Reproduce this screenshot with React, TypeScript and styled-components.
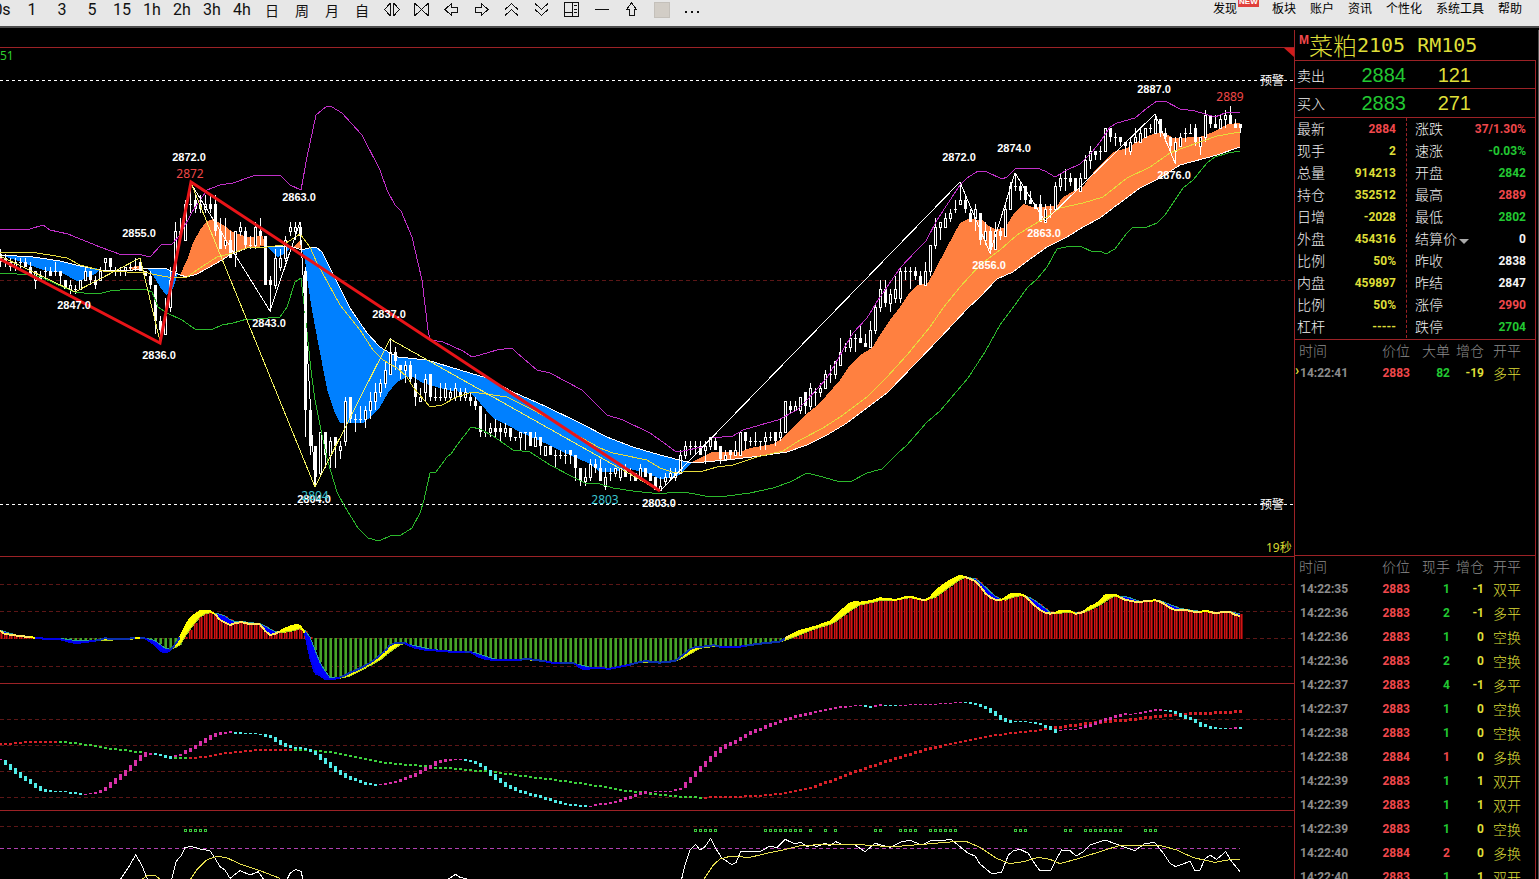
import React from "react";
import styled, { createGlobalStyle } from "styled-components";

const RED_LINE = "#9c2226";
const UI_FONT = '"Noto Sans CJK SC", sans-serif';

const GlobalStyle = createGlobalStyle`
  * { box-sizing: border-box; }
  body { margin: 0; background: #000; font-family: ${UI_FONT}; }
`;

/* ---------- page shell ---------- */

const Page = styled.div`
  display: flex;
  flex-direction: column;
  height: 100vh;
  overflow: hidden;
  background: #000;
`;

const Toolbar = styled.header`
  display: flex;
  flex: none;
  justify-content: space-between;
  height: 28px;
  overflow: hidden;
  background: #e7e7e7;
  border-bottom: 2px solid #4c4c4c;
`;

const PeriodBar = styled.nav`
  display: flex;
  margin-left: -13px;
`;

const ToolButton = styled.button`
  display: flex;
  align-items: center;
  justify-content: center;
  width: 30px;
  height: 20px;
  padding: 0;
  border: 0;
  background: none;
  color: #111;
  font: 16px/20px Roboto, sans-serif;

  svg { display: block; fill: none; stroke: #111; shape-rendering: crispEdges; }
`;

const CjkToolButton = styled(ToolButton)`
  font: 14px/20px ${UI_FONT};
`;

const Swatch = styled.span`
  width: 16px;
  height: 16px;
  background: #d2cdc6;
  border: 1px solid #c4c0ba;
`;

const MenuBar = styled.nav`
  display: flex;
  gap: 14px;
  padding-right: 17px;
`;

const MenuLink = styled.a<{ $wide?: boolean }>`
  position: relative;
  height: 16px;
  margin-right: ${(p) => (p.$wide ? 21 : 0)}px;
  color: #000;
  font-size: 12px;
  line-height: 16px;
  text-decoration: none;
  white-space: nowrap;
`;

const NewBadge = styled.span`
  position: absolute;
  top: -4px;
  left: 25px;
  width: 21px;
  height: 11px;
  background: #e0403c;
  color: #fff;
  font: bold 8px/12px "Liberation Sans", sans-serif;
  text-align: center;
`;

const Workspace = styled.div`
  display: flex;
  flex: 1;
  min-height: 0;
`;

/* ---------- chart column ---------- */

const ChartColumn = styled.main`
  flex: 1;
  min-width: 0;
  overflow: hidden;
`;

const ChartStrip = styled.div`
  height: 20px;
  border-bottom: 1px solid ${RED_LINE};
`;

const ChartPane = styled.section`
  border-bottom: 1px solid ${RED_LINE};

  svg { display: block; width: 100%; height: auto; }
`;

const LAST_X = 1240;
const xOf = (i: number) => i * 5;
const yOf = (price: number) => Math.round(182 + (2872 - price) * 4.47);

type Point = [number, number];

const parse = (text: string): Point[] =>
  text.trim().split(/\s+/).map((pair) => pair.split(",").map(Number) as Point);

/* Indicator traces are sampled in thirds of a unit, in sections that each start at their own x. */
const sections = (...parts: [number, string][]): Point[] =>
  parts.flatMap(([x0, text]) =>
    parse(text).map(([x, y]) => [x0 + x / 3, 560 + y / 3] as Point)
  );

const join = (points: Point[]) => points.map((p) => p.join(",")).join(" ");

const valueAt = (points: Point[], x: number) => {
  const next = points.findIndex((p) => p[0] >= x);
  if (next === 0) return points[0][1];
  if (next < 0) return points[points.length - 1][1];
  const [x1, y1] = points[next - 1];
  const [x2, y2] = points[next];
  return x2 === x1 ? y2 : y1 + ((y2 - y1) * (x - x1)) / (x2 - x1);
};

/* open, high, low, close, as points above 2800 */
const CANDLES = `
56,57,53,54 55,56,53,54 54,55,52,53 53,55,52,54 54,55,52,54 54,55,53,53 53,54,51,51 50,52,48,52
51,52,50,50 52,53,50,52 52,53,51,51 52,54,51,52 52,52,49,51 50,50,48,48 48,50,47,49 48,49,47,48
48,50,48,50 50,53,50,52 52,52,49,50 50,51,48,49 50,53,50,52 54,55,52,55 55,55,52,53 52,53,51,52
52,53,51,52 52,53,51,53 53,54,52,53 53,55,52,53 54,55,52,52 52,52,51,51 51,52,48,49 49,49,38,41
41,42,37,39 38,46,38,42 44,53,43,50 52,63,51,61 60,64,59,61 59,68,59,67 67,72,65,67 68,69,65,66
67,69,65,66 66,69,65,67 67,69,65,66 67,69,60,61 61,64,57,57 58,64,57,59 59,61,55,55 56,61,53,61
61,63,60,62 61,62,57,58 58,60,57,58 58,63,57,62 61,64,58,60 60,60,49,49 50,51,43,49 49,57,48,55
53,57,52,55 55,60,54,59 61,63,60,62 61,63,59,62 62,63,58,60 52,53,15,21 21,22,11,13 13,13,4,6
7,16,6,16 16,16,8,11 11,15,8,14 15,15,8,13 12,14,10,13 14,24,13,23 24,24,18,19 19,20,16,19
19,22,18,19 19,22,17,21 21,25,19,23 23,27,21,25 25,28,24,27 27,32,26,30 29,37,29,34 34,35,30,32
31,31,28,30 30,32,27,31 31,32,27,28 27,29,22,24 23,26,23,24 25,29,23,28 29,29,23,24 24,26,23,24
24,27,23,24 24,27,23,26 24,26,23,25 24,27,23,26 25,26,23,24 24,26,23,25 24,25,22,23 23,24,21,22
22,22,15,16 16,20,15,16 16,18,15,17 17,19,15,16 17,18,14,16 16,18,15,17 17,17,14,15 15,15,14,15
15,16,12,16 16,16,12,16 16,16,13,13 13,16,13,15 15,15,11,13 11,13,11,13 13,13,11,11 11,12,8,11
11,12,10,11 11,12,9,11 12,12,9,11 11,11,5,8 8,8,4,5 5,8,4,6 6,10,5,9 9,10,7,8
8,10,5,5 4,8,3,6 7,8,5,7 7,8,6,8 6,8,5,8 8,9,6,6 7,8,5,7 7,7,5,5
6,9,5,8 8,8,6,6 7,7,5,5 6,6,3,3 3,6,3,4 5,7,4,6 6,8,5,7 6,8,5,7
7,12,7,11 11,14,10,13 13,14,11,13 13,14,11,13 13,14,11,11 12,14,9,13 13,15,12,15 14,15,12,12
13,13,9,10 10,12,10,11 12,12,10,11 11,14,11,12 11,16,11,16 16,16,12,14 14,15,13,14 14,16,13,14
14,14,12,14 14,16,12,15 15,16,14,15 16,16,13,14 15,19,14,16 16,23,16,23 22,23,20,21 21,23,21,22
21,24,20,24 25,25,20,22 22,27,21,26 25,26,22,25 25,27,24,26 26,30,26,29 29,31,27,29 29,32,28,32
31,37,31,34 35,36,34,35 35,39,34,37 37,38,34,37 37,40,36,36 36,38,35,35 35,41,35,39 39,45,38,44
44,50,43,48 48,50,44,45 45,48,43,47 46,51,45,48 46,53,45,52 52,53,50,52 52,53,48,52 52,53,50,51
51,52,49,49 49,54,49,52 52,58,51,58 58,64,57,62 62,63,59,63 62,65,62,64 64,66,63,65 66,68,65,66
67,72,67,68 68,69,65,66 65,66,63,63 64,67,61,66 65,65,58,59 59,63,58,61 61,62,56,57 57,63,57,61
61,62,59,60 60,67,60,66 66,72,66,71 71,74,70,71 71,72,68,70 71,71,67,68 68,70,67,67 67,67,66,66
67,69,63,63 63,67,63,66 66,67,64,66 66,72,66,71 71,74,70,73 73,75,70,73 73,74,71,72 73,73,70,70
70,74,70,73 73,78,73,77 77,80,75,79 79,79,77,78 79,80,77,79 79,84,79,84 84,84,81,82 82,83,80,82
82,82,80,81 81,81,78,80 79,82,78,81 81,84,81,82 81,84,81,83 82,84,82,84 84,85,83,84 83,87,83,86
86,86,82,83 83,84,81,82 82,82,79,80 79,82,76,81 80,83,80,82 83,84,81,83 83,85,83,83 84,85,80,81
80,82,78,82 82,88,81,87 87,87,84,85 85,87,84,84 84,87,84,86 86,88,84,87 87,89,85,85 85,86,84,84
85,85,83,84`
  .trim()
  .split(/\s+/)
  .map((c) => c.split(",").map((v) => 2800 + Number(v)));

const UPPER_BAND = `0,229 30,229 43,225 50,230 68,234 100,247 122,255 138,254 150,257 161,245 172,244 180,235 192,212
207,190 220,185 233,183 253,176 280,175 290,185 301,190 307,157 316,115 327,106 332,107 342,113 362,135 380,170 387,190
395,205 401,211 412,237 422,280 428,330 430,340 443,342 463,351 472,357 480,355 497,350 512,348 517,353 537,370 550,373
567,382 582,390 595,403 607,415 623,420 650,433 667,445 675,451 683,451 702,447 712,438 733,436 743,430 767,423 778,420
797,410 807,400 827,378 843,350 853,333 867,318 878,300 885,290 900,268 917,250 926,241 937,220 960,185 967,178 978,171
987,172 1002,179 1007,177 1015,169 1020,168 1037,168 1045,171 1055,177 1067,170 1080,164 1092,152 1100,142 1110,127
1117,123 1135,118 1147,108 1157,101 1165,101 1180,109 1195,111 1205,114 1215,117 1225,113 1240,112`;

const LOWER_BAND = `0,273 17,274 33,275 43,278 63,287 75,292 80,292 88,294 102,293 110,291 130,289 147,290 152,292 158,307
167,313 182,320 195,329 213,329 222,325 233,323 247,319 257,319 280,317 287,307 295,282 301,278 305,313 311,370 315,400
322,435 328,462 337,492 345,507 358,528 368,538 379,541 390,536 401,535 412,528 420,513 424,500 430,473 436,472 447,457
451,454 457,445 471,427 480,429 493,436 513,450 530,452 550,465 573,477 585,483 597,483 613,488 633,491 661,494 667,493
682,492 695,494 710,497 727,496 750,493 773,488 790,482 807,473 823,477 840,482 852,481 867,473 882,469 897,454 907,445
927,422 940,411 968,378 985,352 1000,325 1012,309 1027,288 1037,279 1047,267 1057,249 1070,246 1082,247 1093,252
1100,251 1106,254 1115,249 1127,233 1133,227 1147,227 1157,223 1165,215 1183,188 1193,180 1207,163 1215,157 1228,153 1240,151`;

const SLOW_MA = `0,255 33,257 60,261 80,266 100,270 133,270 147,268 167,269 180,275 187,277 197,274 217,263 230,255 247,248
265,247 290,246 302,250 312,247 316,247 322,252 335,278 350,308 367,333 380,347 390,353 398,357 427,360 450,367 470,373
487,378 513,392 547,407 580,423 607,437 633,447 653,453 679,460 692,463 727,460 760,456 787,452 807,445 827,435 847,423
867,408 887,393 917,362 940,338 968,308 980,297 997,279 1013,272 1033,257 1047,247 1067,237 1083,227 1100,218 1113,208
1140,188 1160,178 1180,165 1217,155 1240,147`;

const MID_MA = `0,252 30,252 50,255 67,258 80,265 103,271 127,272 143,272 157,275 173,278 187,277 200,268 217,257 233,253
247,248 267,247 283,245 300,234 310,247 317,263 340,305 360,330 373,350 383,360 397,368 407,377 413,387 430,407 442,405
457,397 472,392 507,397 533,410 557,423 580,437 600,448 613,453 647,460 660,468 675,473 683,472 703,471 717,467 733,465
757,457 783,451 800,440 823,428 843,415 867,397 887,377 907,355 930,327 943,308 960,287 980,265 1000,250 1017,235
1033,225 1047,217 1060,208 1083,203 1103,197 1127,178 1150,167 1170,153 1183,148 1217,136 1240,132`;

const FALLING = [
  "0,255 33,257 60,261 80,266 100,269 95,274 82,280 77,281 62,273 43,270 27,264 10,258",
  "147,268 167,269 178,274 175,283 171,293 166,295 160,287 153,275",
  "268,247 290,246 297,248 290,249 282,255 278,257 273,253",
  `302,250 312,247 316,247 322,252 335,278 350,308 367,333 380,347 390,353 398,357 427,360 450,367 470,373 487,378
   513,392 547,407 580,423 607,437 633,447 653,453 679,460 692,462 680,475 667,478 660,479 647,473 630,469 613,472
   600,472 590,464 577,458 563,452 547,444 533,438 520,432 507,425 493,418 480,403 475,397 470,393 447,390 423,383
   413,377 407,377 397,382 388,393 380,407 373,415 363,423 340,423 335,413 328,393 322,363 317,337 312,310 308,285 305,260`,
];

const RISING = [
  "128,269 135,266 141,266 143,271",
  `180,275 187,260 193,243 200,230 207,221 213,219 223,225 233,232 247,237 263,236 265,246 247,248 230,255 217,263
   197,274 187,277`,
  "293,247 300,241 302,249",
  `692,462 700,458 712,452 740,452 750,448 773,444 783,438 790,430 803,417 820,403 833,388 840,380 850,365 860,355
   872,348 880,335 890,320 900,307 910,292 917,285 928,283 935,270 947,247 960,223 968,219 982,220 987,225 995,229
   1005,228 1013,215 1023,204 1033,207 1057,206 1062,198 1072,192 1082,188 1093,173 1103,162 1113,152 1127,148
   1137,142 1147,136 1157,133 1165,133 1173,138 1200,137 1213,132 1228,124 1240,123 1240,147 1217,155 1180,165
   1160,178 1140,188 1113,208 1100,218 1083,227 1067,237 1047,247 1033,257 1013,272 997,279 980,297 968,308 940,338
   917,362 887,393 867,408 847,423 827,435 807,445 787,452 760,456 727,460 692,463`,
];

const PIVOTS: [number, number, string][] = [
  [74, 309, "2847.0"], [139, 237, "2855.0"], [159, 359, "2836.0"], [189, 161, "2872.0"], [269, 327, "2843.0"],
  [299, 201, "2863.0"], [389, 318, "2837.0"], [314, 503, "2804.0"], [659, 507, "2803.0"], [959, 161, "2872.0"],
  [989, 269, "2856.0"], [1014, 152, "2874.0"], [1044, 237, "2863.0"], [1154, 93, "2887.0"], [1174, 179, "2876.0"],
];

const EXTREMES: [number, number, string, string][] = [
  [190, 178, "2872", "#f04848"], [1230, 101, "2889", "#f04848"],
  [315, 500, "2804", "#3cc4d0"], [605, 504, "2803", "#3cc4d0"],
];

const PivotLabel = styled.text`
  fill: #fff;
  font: bold 11px "Liberation Sans", sans-serif;
  text-anchor: middle;
`;

const ExtremeLabel = styled.text`
  font: 12px "Noto Sans", sans-serif;
  text-anchor: middle;
`;

const NoteLabel = styled.text`
  font: 12px "Noto Sans", ${UI_FONT};
`;

const Trace = styled.polyline`
  fill: none;
  stroke-width: 1px;
  shape-rendering: crispEdges;
`;

const GridLines = ({ levels }: { levels: number[] }) => (
  <g stroke="#5c1616" strokeDasharray="4 3" shapeRendering="crispEdges">
    {levels.map((y) => (
      <line key={y} x1={0} x2={1294} y1={y + 0.5} y2={y + 0.5} />
    ))}
  </g>
);

const PriceChart = () => (
  <svg viewBox="0 48 1294 508" role="img" aria-label="菜粕2105 K线">
    <GridLines levels={[280]} />
    <g stroke="#fff" strokeDasharray="3 3" shapeRendering="crispEdges">
      <line x1={0} x2={1294} y1={80.5} y2={80.5} />
      <line x1={0} x2={1294} y1={504.5} y2={504.5} />
    </g>
    <g shapeRendering="crispEdges">
      {FALLING.map((p) => <polygon key={p} points={p} fill="#0080ff" />)}
      {RISING.map((p) => <polygon key={p} points={p} fill="#ff8040" />)}
    </g>
    <g shapeRendering="crispEdges">
      {CANDLES.map(([open, high, low, close], i) => {
        const top = yOf(Math.max(open, close));
        const height = Math.max(1, yOf(Math.min(open, close)) - top);
        const x = xOf(i);
        return (
          <g key={i}>
            <rect x={x} y={yOf(high)} width={1} height={yOf(low) - yOf(high)} fill="#fff" />
            {open > close || height === 1 ? (
              <rect x={x - 1} y={top} width={3} height={height} fill="#fff" />
            ) : (
              <rect x={x - 0.5} y={top + 0.5} width={2} height={height} fill="#000" stroke="#fff" />
            )}
          </g>
        );
      })}
    </g>
    <Trace points={SLOW_MA} stroke="#fff" />
    <Trace points={MID_MA} stroke="#e6dc3c" />
    <Trace points={UPPER_BAND} stroke="#c030c8" />
    <Trace points={LOWER_BAND} stroke="#2cb82c" />
    <Trace points="190,182 270,311 300,222 315,487" stroke="#fff" />
    <Trace points="660,491 960,182 990,253 1015,173 1045,221 1155,114 1175,163" stroke="#fff" />
    <Trace points="0,256 75,292 140,258 160,341 191,183 315,487 390,339 660,491" stroke="#f0f060" />
    <polyline points="0,259 160,343 191,182 660,491" fill="none" stroke="#e81418" strokeWidth={3} />
    {PIVOTS.map(([x, y, label]) => (
      <PivotLabel key={x} x={x} y={y}>{label}</PivotLabel>
    ))}
    {EXTREMES.map(([x, y, label, color]) => (
      <ExtremeLabel key={x} x={x} y={y} fill={color}>{label}</ExtremeLabel>
    ))}
    <NoteLabel x={0} y={60} fill="#2fd02f">51</NoteLabel>
    <NoteLabel x={1260} y={85} fill="#fff">预警</NoteLabel>
    <NoteLabel x={1260} y={509} fill="#fff">预警</NoteLabel>
    <NoteLabel x={1266} y={552} fill="#d8d830">19秒</NoteLabel>
    <polygon points="1284,48 1294,48 1294,57" fill="#d01c1c" />
  </svg>
);

const MACD_FAST = sections(
  [0, `0,213 15,222 60,228 95,232 130,236 185,238 215,248 240,248 300,240 318,233 330,238 385,237 400,233 440,236
    465,255 485,277 500,278 515,268 530,248 545,222 560,190 575,168 600,154 630,154 645,162 660,180 690,195 710,188
    730,186 750,193 780,193 795,212 810,225 830,220 860,203 890,194 905,198 915,220 930,290 945,340 960,345 975,358
    1000,357 1030,350 1040,342 1070,330 1100,315 1130,295 1160,268 1175,250 1210,247 1240,262 1280,270`],
  [430, `0,270 60,275 120,275 145,290 170,298 190,299 270,300 285,296 340,303 370,309 430,308 445,318 460,330 485,324
    540,326 600,314 640,303 690,308 735,303 760,285 785,263 820,260 850,255 870,260 930,260 980,252 1050,245 1065,235
    1110,212 1150,202 1200,185 1225,160 1260,130 1280,125`],
  [860, `0,128 40,122 60,115 110,120 145,108 180,118 200,122 215,108 235,85 270,62 300,47 320,52 350,65 380,105 400,118
    425,122 450,103 490,103 515,128 545,155 575,162 600,153 630,153 640,161 665,160 690,140 715,130 735,105 765,104
    790,118 830,126 870,123 890,120 910,130 940,150 980,150 1010,157 1040,152 1065,160 1100,154 1115,157 1130,168 1143,168`]
);

const MACD_SLOW = sections(
  [0, `0,210 50,226 100,233 185,236 240,243 300,242 440,235 465,242 500,268 515,268 540,255 560,222 580,195 605,165
    635,157 670,165 700,185 740,186 785,192 830,218 870,215 905,205 925,218 945,270 965,320 990,352 1025,355 1050,348
    1100,322 1140,300 1170,275 1200,255 1215,250 1280,265`],
  [430, `0,268 60,273 130,276 190,297 280,298 380,308 440,312 480,322 540,325 640,306 700,308 740,303 775,285 810,265
    860,258 930,259 1050,246 1090,232 1150,208 1210,190 1250,160 1280,140`],
  [860, `0,135 60,122 110,120 150,113 200,120 230,110 270,80 310,52 345,55 370,75 400,105 430,122 470,108 500,107
    530,125 575,160 640,158 680,155 720,135 760,108 800,110 840,124 900,122 960,145 1010,153 1065,157 1110,155 1143,162`]
);

const ZERO = 638;
const STEPS = Array.from({ length: LAST_X / 5 + 1 }, (_, i) => i);

const MacdChart = () => (
  <svg viewBox="0 557 1294 126" role="img" aria-label="MACD">
    <GridLines levels={[584, 611, 638, 666]} />
    <g shapeRendering="crispEdges">
      {STEPS.map((i) => {
        const x = xOf(i);
        const y = Math.round(valueAt(MACD_SLOW, x));
        if (y === ZERO) return null;
        return y < ZERO ? (
          <g key={i}>
            <rect x={x - 1} y={y} width={4} height={ZERO + 1 - y} fill="#780808" />
            <rect x={x - 1} y={y} width={1} height={ZERO + 1 - y} fill="#d01414" />
            <rect x={x + 1} y={y} width={1} height={ZERO + 1 - y} fill="#d01414" />
          </g>
        ) : (
          <g key={i}>
            <rect x={x - 1} y={ZERO} width={3} height={y - ZERO} fill="#236a14" />
            <rect x={x} y={ZERO} width={2} height={y - ZERO} fill="#48a428" />
          </g>
        );
      })}
      {STEPS.slice(0, -1).map((i) => {
        const a = xOf(i);
        const b = xOf(i + 1);
        const f = [valueAt(MACD_FAST, a), valueAt(MACD_FAST, b)];
        const s = [valueAt(MACD_SLOW, a), valueAt(MACD_SLOW, b)];
        const up = f[0] + f[1] < s[0] + s[1];
        const line = (f[0] + f[1]) / 2 < ZERO ? "#ffe860" : up ? "#0a30b0" : "#0000e8";
        return (
          <g key={i}>
            <polygon
              points={`${a},${f[0]} ${b},${f[1]} ${b},${s[1]} ${a},${s[0]}`}
              fill={up ? "#ffff00" : "#0000ff"}
              stroke={up ? "#ffff00" : "none"}
            />
            <line x1={a} y1={s[0]} x2={b} y2={s[1]} stroke={up ? "#b4d020" : "#28a0a0"} />
            <line x1={a} y1={f[0]} x2={b} y2={f[1]} stroke={up && f[0] < ZERO ? "#ffff00" : line} strokeWidth={2} />
          </g>
        );
      })}
    </g>
  </svg>
);

const TREND_FAST = sections(
  [0, `0,597 15,608 60,645 100,672 125,688 150,693 190,695 240,702 265,702 290,698 315,686 345,663 375,640 400,612
    430,585 445,580 480,584 510,592 540,585 580,563 625,535 650,522 690,517 720,520 780,522 810,530 840,548 865,560
    915,567 940,575 970,598 1000,625 1040,650 1090,669 1130,676 1180,668 1220,655 1250,642 1285,622`],
  [430, `0,620 20,608 50,600 90,598 130,605 165,625 195,650 225,672 260,690 300,703 350,716 400,732 440,736 475,739
    510,733 560,725 600,712 640,697 670,696 720,694 750,687 770,672 795,643 820,618 850,585 880,562 920,543 960,520
    1020,495 1080,474 1140,459 1200,448 1240,440 1285,437`],
  [860, `0,437 30,440 60,435 110,437 150,434 210,434 260,430 310,427 345,432 370,440 400,458 430,478 450,485 510,486
    545,494 585,512 650,507 700,492 740,478 790,463 830,461 880,452 905,448 940,455 970,468 1000,480 1020,493
    1060,504 1100,506 1130,503 1145,506`]
);

const TREND_SLOW = sections(
  [0, `0,553 60,548 110,545 175,545 240,551 310,563 380,572 440,580 480,585 520,593 550,594 590,594 640,585 700,576
    780,570 880,569 950,572 1010,580 1070,592 1130,605 1200,613 1280,619`],
  [430, `0,622 60,625 110,630 190,636 260,646 340,656 430,667 520,681 600,694 680,703 750,710 810,713 880,711 960,709
    1020,705 1080,697 1140,683 1200,663 1285,631`],
  [860, `0,630 60,610 120,592 180,573 240,558 310,543 380,530 450,520 530,511 600,502 700,488 800,480 900,468 960,463
    1040,460 1145,455`]
);

const DotSeries = ({ points, up, down, bold }: { points: Point[]; up: string; down: string; bold?: boolean }) => (
  <g shapeRendering="crispEdges">
    {STEPS.map((i) => {
      const x = xOf(i);
      const y = valueAt(points, x);
      const slope = y - valueAt(points, x - 5);
      const thick = bold && x > 1050;
      const height = Math.max(bold ? 2 : 1, Math.min(6, Math.round(Math.abs(slope) * 1.2) + 1)) + (thick ? 1 : 0);
      return (
        <rect
          key={i}
          x={x - 1}
          y={Math.round(y - height / 2)}
          width={3}
          height={height}
          fill={slope <= 0 ? up : down}
        />
      );
    })}
  </g>
);

const TrendChart = () => (
  <svg viewBox="0 684 1294 126" role="img" aria-label="趋势指标">
    <GridLines levels={[719, 745, 771, 797]} />
    <DotSeries points={TREND_SLOW} up="#d82028" down="#3cd03c" bold />
    <DotSeries points={TREND_FAST} up="#d830a8" down="#50ece8" />
  </svg>
);

const KDJ_WHITE = [
  sections([0, "362,957 390,915 407,884 425,915 442,957"]),
  sections([0, `515,957 528,905 545,885 555,862 575,860 605,868 630,872 645,895 660,920 675,930 690,955 720,932
    750,945 775,935 790,957`]),
  sections([0, "862,957 870,940 887,928 905,935 907,957"]),
  sections([430, "55,957 77,943 90,952 110,957"]),
  sections(
    [430, `755,957 765,915 780,870 797,853 810,870 825,860 842,835 855,862 875,893 905,914 918,908 932,875 990,875
      1020,858 1040,863 1065,838 1095,852 1112,846 1130,860 1145,855 1160,860 1185,850 1200,857 1217,845 1235,853 1275,855`],
    [860, `0,865 15,875 45,850 90,862 125,845 150,841 185,855 210,843 275,839 300,860 325,880 345,888 360,912 395,941
      425,937 445,885 460,873 480,868 505,880 520,905 540,933 572,932 590,895 605,870 630,872 648,888 670,875 690,855
      735,840 790,860 825,872 855,850 885,848 910,880 930,910 947,920 990,904 1005,932 1020,930 1035,897 1050,885
      1070,898 1097,875 1115,905 1140,935`]
  ),
];

const KDJ_YELLOW = [
  sections([0, "428,957 440,948 465,946 480,957"]),
  sections([0, "572,957 590,930 620,900 650,889 680,893 720,912 780,932 840,955"]),
  sections(
    [430, "822,957 850,915 870,897 900,889 960,892 1010,880 1060,870 1110,857 1170,854 1285,854"],
    [860, `0,854 60,858 125,858 200,852 270,846 320,845 360,862 410,895 450,911 490,905 535,892 570,898 600,911
      650,897 720,875 780,856 900,856 950,870 1000,893 1065,907 1110,899 1140,899`]
  ),
];

/* first x and count of each run of signal marks */
const SIGNALS: [number, number][] = [
  [185, 5], [695, 5], [765, 8], [810, 1], [825, 1], [835, 1], [875, 2], [900, 4], [930, 6], [1015, 3], [1065, 2],
  [1085, 8], [1145, 3],
];

const KdjChart = () => (
  <svg viewBox="0 811 1294 68" role="img" aria-label="KDJ">
    <GridLines levels={[826]} />
    <line x1={0} x2={LAST_X} y1={848.5} y2={848.5} stroke="#b040b0" strokeDasharray="4 3" shapeRendering="crispEdges" />
    <g fill="#000" stroke="#3cc83c" shapeRendering="crispEdges">
      {SIGNALS.flatMap(([start, count]) =>
        Array.from({ length: count }, (_, k) => start + k * 5).map((x) => (
          <rect key={x} x={x - 0.5} y={829.5} width={2} height={2} />
        ))
      )}
    </g>
    {KDJ_WHITE.map((p) => <Trace key={join(p)} points={join(p)} stroke="#fff" />)}
    {KDJ_YELLOW.map((p) => <Trace key={join(p)} points={join(p)} stroke="#e8e050" />)}
  </svg>
);

/* ---------- quote panel ---------- */

const tones = {
  red: "#f0484c",
  green: "#22c832",
  yellow: "#dede38",
  white: "#f4f4f4",
  gray: "#8c8c8c",
};
type Tone = keyof typeof tones;

const QuotePanel = styled.aside`
  display: flex;
  flex: none;
  flex-direction: column;
  width: 245px;
  margin-top: 2px;
  padding-right: 2px;
  border-left: 1px solid ${RED_LINE};
  border-right: 1px solid #555;
`;

const Instrument = styled.h1`
  display: flex;
  flex: none;
  align-items: center;
  height: 30px;
  margin: 0;
  padding-left: 4px;
  color: #dede38;
  font: 300 24px/30px ${UI_FONT};
`;

const MarketMark = styled.sup`
  align-self: flex-start;
  width: 10px;
  color: #f0484c;
  font: bold 12px/20px "Liberation Sans", sans-serif;
`;

const Code = styled.span`
  font: 20px/30px "DejaVu Sans Mono", monospace;
  white-space: pre;
`;

const Framed = styled.div`
  display: flex;
  flex: 1;
  flex-direction: column;
  min-height: 0;
  border-right: 1px solid ${RED_LINE};
`;

const BidRow = styled.div<{ $tall?: boolean }>`
  display: grid;
  flex: none;
  grid-template-columns: 49px 60px 65px;
  align-items: center;
  height: ${(p) => (p.$tall ? 29 : 28)}px;
  padding-left: 2px;
  border-top: 1px solid ${RED_LINE};
  color: #f4f4f4;
  font-size: 14px;
  font-weight: 300;
  line-height: 28px;
`;

const BigNumber = styled.span<{ $tone: Tone }>`
  color: ${(p) => tones[p.$tone]};
  font: 20px/28px "Liberation Sans", sans-serif;
  text-align: right;
`;

const Stats = styled.div`
  display: flex;
  flex: none;
  padding-bottom: 1px;
  border-top: 1px solid ${RED_LINE};
`;

const StatColumn = styled.dl<{ $second?: boolean }>`
  flex: ${(p) => (p.$second ? "1" : "0 0 112px")};
  margin: 0;
  padding: ${(p) => (p.$second ? "0 9px 0 8px" : "0 10px 0 2px")};
  border-right: ${(p) => (p.$second ? "0" : `1px dashed ${RED_LINE}`)};
`;

const Stat = styled.div`
  display: flex;
  justify-content: space-between;
  height: 22px;
`;

const StatName = styled.dt`
  display: flex;
  align-items: center;
  height: 20px;
  color: #f4f4f4;
  font-size: 14px;
  font-weight: 300;
  line-height: 20px;
`;

const StatValue = styled.dd<{ $tone: Tone }>`
  margin: 0;
  color: ${(p) => tones[p.$tone]};
  font: bold 12px/22px Roboto, sans-serif;
`;

const Caret = styled.span`
  margin: 6px 0 0 2px;
  border: 5px solid transparent;
  border-top-color: #aaa;
  border-bottom: 0;
`;

const TickSection = styled.section<{ $fill?: boolean }>`
  flex: ${(p) => (p.$fill ? "1" : "0 0 216px")};
  min-height: 0;
  overflow: hidden;
  border-top: 1px solid ${RED_LINE};
`;

const TickTable = styled.table`
  width: 100%;
  table-layout: fixed;
  border-collapse: collapse;
`;

const HeadCell = styled.th<{ $left?: boolean }>`
  height: 21px;
  padding: 0 0 0 ${(p) => (p.$left ? 4 : 0)}px;
  color: #8c8c8c;
  font-size: 14px;
  font-weight: 300;
  line-height: 21px;
  text-align: ${(p) => (p.$left ? "left" : "right")};
`;

const Cell = styled.td<{ $tone: Tone; $left?: boolean; $short?: boolean }>`
  position: relative;
  height: ${(p) => (p.$short ? 18 : 24)}px;
  padding: 0 0 0 ${(p) => (p.$left ? 5 : 0)}px;
  color: ${(p) => tones[p.$tone]};
  font: bold 12px/18px Roboto, sans-serif;
  text-align: ${(p) => (p.$left ? "left" : "right")};
`;

const KindCell = styled.td`
  padding: 0 0 0 9px;
  color: #dede38;
  font-size: 14px;
  font-weight: 300;
  line-height: 18px;
`;

const KindHead = styled(HeadCell)`
  padding-left: 9px;
`;

const RowMarker = styled.span`
  position: absolute;
  top: 0;
  left: 0;
  color: #dede38;
  font-size: 14px;
`;

const LEFT_STATS: [string, string, Tone][] = [
  ["最新", "2884", "red"], ["现手", "2", "yellow"], ["总量", "914213", "yellow"], ["持仓", "352512", "yellow"],
  ["日增", "-2028", "yellow"], ["外盘", "454316", "yellow"], ["比例", "50%", "yellow"], ["内盘", "459897", "yellow"],
  ["比例", "50%", "yellow"], ["杠杆", "-----", "yellow"],
];

const RIGHT_STATS: [string, string, Tone][] = [
  ["涨跌", "37/1.30%", "red"], ["速涨", "-0.03%", "green"], ["开盘", "2842", "green"], ["最高", "2889", "red"],
  ["最低", "2802", "green"], ["结算价", "0", "white"], ["昨收", "2838", "white"], ["昨结", "2847", "white"],
  ["涨停", "2990", "red"], ["跌停", "2704", "green"],
];

type Tick = { time: string; price: string; volume: string; tone: Tone; change: string; kind: string };

const tick = (time: string, price: string, volume: string, change: string, kind: string, tone: Tone = "green"): Tick => ({
  time: `14:22:${time}`, price, volume, change, kind, tone,
});

const BIG_TICKS = [tick("41", "2883", "82", "-19", "多平")];

const TICKS = [
  tick("35", "2883", "1", "-1", "双平"), tick("36", "2883", "2", "-1", "多平"), tick("36", "2883", "1", "0", "空换"),
  tick("36", "2883", "2", "0", "空换"), tick("37", "2883", "4", "-1", "多平"), tick("37", "2883", "1", "0", "空换"),
  tick("38", "2883", "1", "0", "空换"), tick("38", "2884", "1", "0", "多换", "red"), tick("39", "2883", "1", "1", "双开"),
  tick("39", "2883", "1", "1", "双开"), tick("39", "2883", "1", "0", "空换"), tick("40", "2884", "2", "0", "多换", "red"),
  tick("40", "2883", "1", "1", "双开"),
];

const StatList = ({ rows, second }: { rows: [string, string, Tone][]; second?: boolean }) => (
  <StatColumn $second={second}>
    {rows.map(([name, value, tone], i) => (
      <Stat key={i}>
        <StatName>{name}{name === "结算价" && <Caret />}</StatName>
        <StatValue $tone={tone}>{value}</StatValue>
      </Stat>
    ))}
  </StatColumn>
);

const Ticks = ({ volumeLabel, rows, marked }: { volumeLabel: string; rows: Tick[]; marked?: boolean }) => (
  <TickTable>
    <colgroup>
      <col style={{ width: 71 }} />
      <col style={{ width: 44 }} />
      <col style={{ width: 40 }} />
      <col style={{ width: 34 }} />
      <col />
    </colgroup>
    <thead>
      <tr>
        <HeadCell $left>时间</HeadCell>
        <HeadCell>价位</HeadCell>
        <HeadCell>{volumeLabel}</HeadCell>
        <HeadCell>增仓</HeadCell>
        <KindHead $left>开平</KindHead>
      </tr>
    </thead>
    <tbody>
      {rows.map((row, i) => (
        <tr key={i}>
          <Cell $tone="gray" $left $short={marked}>{marked && <RowMarker>›</RowMarker>}{row.time}</Cell>
          <Cell $tone="red">{row.price}</Cell>
          <Cell $tone={row.tone}>{row.volume}</Cell>
          <Cell $tone="yellow">{row.change}</Cell>
          <KindCell>{row.kind}</KindCell>
        </tr>
      ))}
    </tbody>
  </TickTable>
);

/* ---------- toolbar ---------- */

const PERIODS = ["0s", "1", "3", "5", "15", "1h", "2h", "3h", "4h"];
const CALENDAR_PERIODS = ["日", "周", "月", "自"];

const TOOL_ICONS: [string, string][] = [
  ["拉宽", "M7.5 2v13M10.5 2v13M7 2.5L1.5 8.5l5.5 6M11 2.5l5.5 6-5.5 6"],
  ["压缩", "M1.5 2v13M15.5 2v13M2 2.5l6.5 6-6.5 6M15 2.5l-6.5 6 6.5 6"],
  ["左移", "M2 8.5L8.500 2.500v3.500h6v5h-6v3.500z"],
  ["右移", "M15 8.500L8.500 2.500v3.500h-6v5h6v3.500z"],
  ["向上", "M2 8.500l6.500-6 6.500 6M2 14.500l6.500-6 6.500 6"],
  ["向下", "M2 2.500l6.500 6 6.500-6M2 8.500l6.500 6 6.500-6"],
  ["布局", "M1.500 1.500h14v14h-14zM9.500 2v13M2 11.500h7M11 4.500h3M11 8.500h3M11 11.500h3"],
  ["画线", "M2 8.500h14"],
  ["上箭头", "M8.500 2L3.500 8.500h2.500v6h5v-6h2.500z"],
];

const MENU = ["发现", "板块", "账户", "资讯", "个性化", "系统工具", "帮助"];

export default function App() {
  return (
    <Page>
      <GlobalStyle />
      <Toolbar>
        <PeriodBar aria-label="周期">
          {PERIODS.map((label) => <ToolButton key={label}>{label}</ToolButton>)}
          {CALENDAR_PERIODS.map((label) => <CjkToolButton key={label}>{label}</CjkToolButton>)}
          {TOOL_ICONS.map(([label, path]) => (
            <ToolButton key={label} aria-label={label}>
              <svg width="18" height="18" viewBox="0 0 18 18"><path d={path} /></svg>
            </ToolButton>
          ))}
          <ToolButton aria-label="颜色"><Swatch /></ToolButton>
          <ToolButton aria-label="更多">
            <svg width="18" height="18" viewBox="0 0 18 18"><path d="M2 11h2M8 11h2M14 11h2" strokeWidth="2" /></svg>
          </ToolButton>
        </PeriodBar>
        <MenuBar aria-label="菜单">
          {MENU.map((label, i) => (
            <MenuLink key={label} href="#" $wide={i === 0}>
              {label}
              {i === 0 && <NewBadge>NEW</NewBadge>}
            </MenuLink>
          ))}
        </MenuBar>
      </Toolbar>
      <Workspace>
        <ChartColumn>
          <ChartStrip />
          <ChartPane><PriceChart /></ChartPane>
          <ChartPane><MacdChart /></ChartPane>
          <ChartPane><TrendChart /></ChartPane>
          <ChartPane><KdjChart /></ChartPane>
        </ChartColumn>
        <QuotePanel>
          <Instrument>
            <MarketMark>M</MarketMark>菜粕<Code>2105 RM105</Code>
          </Instrument>
          <Framed>
            <BidRow>
              <span>卖出</span>
              <BigNumber $tone="green">2884</BigNumber>
              <BigNumber $tone="yellow">121</BigNumber>
            </BidRow>
            <BidRow $tall>
              <span>买入</span>
              <BigNumber $tone="green">2883</BigNumber>
              <BigNumber $tone="yellow">271</BigNumber>
            </BidRow>
            <Stats>
              <StatList rows={LEFT_STATS} />
              <StatList rows={RIGHT_STATS} second />
            </Stats>
            <TickSection>
              <Ticks volumeLabel="大单" rows={BIG_TICKS} marked />
            </TickSection>
            <TickSection $fill>
              <Ticks volumeLabel="现手" rows={TICKS} />
            </TickSection>
          </Framed>
        </QuotePanel>
      </Workspace>
    </Page>
  );
}
